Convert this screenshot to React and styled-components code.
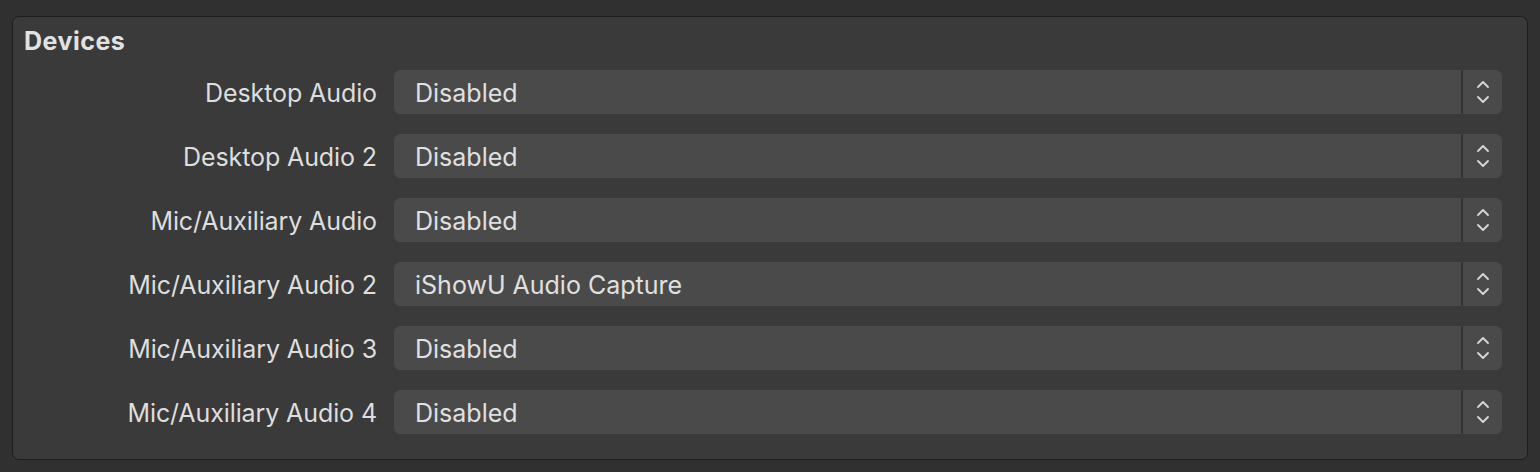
import styled, { createGlobalStyle } from 'styled-components'

const GlobalStyle = createGlobalStyle`
body {
    margin: 0;
    background: #303030;
    font-family: Inter, "Noto Sans", sans-serif;
}
`

const Page = styled.div`
width: 1540px;
height: 472px;
box-sizing: border-box;
padding: 16px 12px 12px 12px;
`

const GroupBox = styled.div`
height: 444px;
box-sizing: border-box;
background: #3a3a3a;
border: 1px solid #1d1d1d;
border-radius: 7px;
padding: 10px 25px 0 10px;
`

const Title = styled.div`
color: #e2e2e2;
font-size: 25px;
font-weight: 700;
letter-spacing: 0.5px;
line-height: 28px;
margin-bottom: 15px;
padding-left: 1px;
`

const Form = styled.div`
display: grid;
grid-template-columns: 354px 1fr;
column-gap: 17px;
row-gap: 20px;
`

const Label = styled.div`
color: #dedede;
font-size: 25px;
letter-spacing: -0.1px;
line-height: 44px;
padding-top: 1px;
height: 44px;
box-sizing: border-box;
text-align: right;
white-space: nowrap;
`

const Combo = styled.div`
display: flex;
height: 44px;
background: #4a4a4a;
border-radius: 6px;
overflow: hidden;
`

const Value = styled.div`
flex: 1;
color: #e0e0e0;
font-size: 25px;
line-height: 44px;
padding-top: 1px;
box-sizing: border-box;
padding-left: 21px;
border-right: 2px solid #343434;
`

const Stepper = styled.div`
width: 39px;
display: flex;
align-items: center;
justify-content: center;
`

const Chevrons = () => (
    <svg width="14" height="26" viewBox="0 0 14 26" fill="none" stroke="#d8d8d8" strokeWidth="1.8" strokeLinecap="round" strokeLinejoin="round">
        <path d="M2 8 L7 3 L12 8" />
        <path d="M2 18 L7 23 L12 18" />
    </svg>
)

const devices = [
    ['Desktop Audio', 'Disabled'],
    ['Desktop Audio 2', 'Disabled'],
    ['Mic/Auxiliary Audio', 'Disabled'],
    ['Mic/Auxiliary Audio 2', 'iShowU Audio Capture'],
    ['Mic/Auxiliary Audio 3', 'Disabled'],
    ['Mic/Auxiliary Audio 4', 'Disabled'],
]

export default function App() {
    return (
        <>
            <GlobalStyle />
            <Page>
                <GroupBox>
                    <Title>Devices</Title>
                    <Form>
                        {devices.map(([label, value]) => (
                            <>
                                <Label key={label + 'l'}>{label}</Label>
                                <Combo key={label + 'c'}>
                                    <Value>{value}</Value>
                                    <Stepper><Chevrons /></Stepper>
                                </Combo>
                            </>
                        ))}
                    </Form>
                </GroupBox>
            </Page>
        </>
    )
}
